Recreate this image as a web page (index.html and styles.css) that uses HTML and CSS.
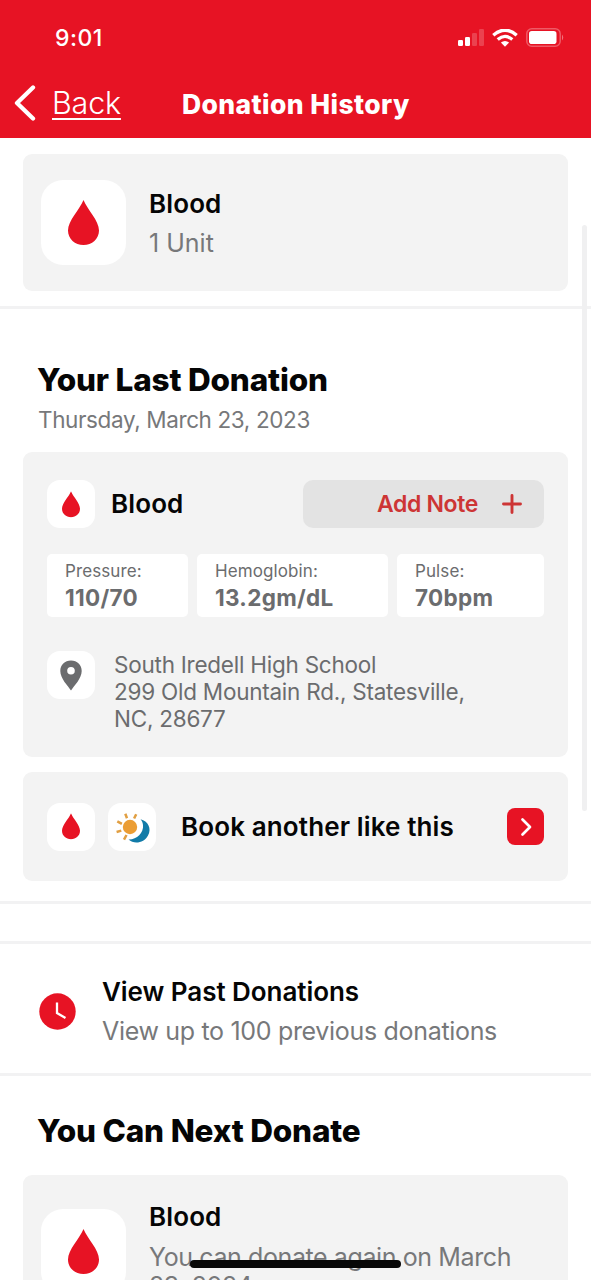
FILE: index.html
```
<!DOCTYPE html>
<html lang="en">
<head>
<meta charset="utf-8">
<title>Donation History</title>
<link rel="stylesheet" href="styles.css">
</head>
<body>
<svg width="0" height="0" class="defs" aria-hidden="true">
  <symbol id="drop" viewBox="0 0 31 46"><path d="M15.500 0C19.500 10 31 20.500 31 30.500C31 39 24 45 15.500 45C7 45 0 39 0 30.500C0 20.500 11.500 10 15.500 0Z" fill="#e71324"/></symbol>
</svg>
<div class="screen">
  <header class="header">
    <div class="status">
      <span class="time">9:01</span>
      <div class="status-icons">
        <svg width="26" height="18" viewBox="0 0 26 18" fill="#fff"><rect x="0" y="11" width="5" height="6" rx="1.200"/><rect x="7" y="8" width="5" height="9" rx="1.200"/><rect x="14" y="4" width="5" height="13" rx="1.200" opacity=".2"/><rect x="21" y="0" width="5" height="17" rx="1.200" opacity=".2"/></svg>
        <svg class="wifi" width="26" height="18" viewBox="0 0 26 18"><path d="M1.300 6.200Q13-3.800 24.700 6.200" fill="none" stroke="#fff" stroke-width="3.400"/><path d="M5.700 10.600Q13 4.200 20.300 10.600" fill="none" stroke="#fff" stroke-width="3.300"/><path d="M8.900 13.600Q13 10.400 17.100 13.600L13 17.800Z" fill="#fff"/></svg>
        <svg class="battery" width="39" height="19" viewBox="0 0 39 19"><rect x=".8" y=".8" width="33.400" height="17.400" rx="5" fill="none" stroke="#fff" stroke-opacity=".3" stroke-width="1.500"/><rect x="3" y="3" width="27.500" height="13" rx="2.800" fill="#fff"/><path d="M36 6.500Q38.500 9.500 36 12.500Z" fill="#fff" opacity=".4"/></svg>
      </div>
    </div>
    <nav class="nav">
      <svg class="chevron" width="22" height="36" viewBox="0 0 22 36"><path d="M19 2.500L3 18L19 33.500" fill="none" stroke="#fff" stroke-width="4.300" stroke-linecap="round" stroke-linejoin="round"/></svg>
      <a class="back">Back</a>
      <h1 class="title">Donation History</h1>
    </nav>
  </header>

  <main class="content">
    <section class="card unit-card">
      <div class="tile tile-large"><svg width="31" height="46"><use href="#drop"/></svg></div>
      <div class="unit-text">
        <div class="name">Blood</div>
        <div class="sub unit">1 Unit</div>
      </div>
    </section>
    <hr class="rule rule-first">

    <h2 class="heading last-heading">Your Last Donation</h2>
    <div class="date">Thursday, March 23, 2023</div>

    <section class="card last-card">
      <div class="last-top">
        <div class="tile"><svg width="18" height="27" viewBox="0 0 31 46"><use href="#drop"/></svg></div>
        <div class="name last-name">Blood</div>
        <div class="add-note">
          <span class="add-label">Add Note</span>
          <svg width="20" height="20" viewBox="0 0 20 20"><path d="M10 1.500V18.500M1.500 10H18.500" stroke="#cd3535" stroke-width="2.900" stroke-linecap="round"/></svg>
        </div>
      </div>
      <div class="stats">
        <div class="stat"><span class="stat-label">Pressure:</span><span class="stat-value">110/70</span></div>
        <div class="stat"><span class="stat-label">Hemoglobin:</span><span class="stat-value">13.2gm/dL</span></div>
        <div class="stat"><span class="stat-label">Pulse:</span><span class="stat-value">70bpm</span></div>
      </div>
      <div class="place">
        <div class="tile"><svg width="22" height="31" viewBox="0 0 22 31"><path fill-rule="evenodd" d="M11 .5C4.800 .5 .3 5 .3 11C.3 18.500 8 26 11 30.500C14 26 21.700 18.500 21.700 11C21.700 5 17.200 .5 11 .5ZM11 7A3.800 3.800 0 1 1 11 14.600A3.800 3.800 0 1 1 11 7Z" fill="#6b6c6e"/></svg></div>
        <div class="address">South Iredell High School<br>299 Old Mountain Rd., Statesville,<br>NC, 28677</div>
      </div>
    </section>

    <section class="card book-card">
      <div class="tile"><svg width="18" height="27" viewBox="0 0 31 46"><use href="#drop"/></svg></div>
      <div class="tile"><svg width="48" height="48" viewBox="0 0 48 48"><path d="M32.500 16.200C40 18 44 25.500 40 32.500C36.500 39.500 26.500 42 20.500 36.500C28 37 36 30 35 22C34.700 19.500 34 17.800 32.500 16.200Z" fill="#117ba8"/><circle cx="22" cy="24" r="7.200" fill="#eb9d34"/><path d="M19 15.300L17.300 10.800M26.100 15.500L28.200 11.300M13.900 20.900L9.300 18.300M13.300 27.600L8.600 29M18.500 32L16 36.600" stroke="#e19f42" stroke-width="2.500"/></svg></div>
      <div class="name book-label">Book another like this</div>
      <div class="go"><svg width="14" height="20" viewBox="0 0 14 20"><path d="M3.500 2.500L11 10L3.500 17.500" fill="none" stroke="#fff" stroke-width="2.700" stroke-linecap="round" stroke-linejoin="round"/></svg></div>
    </section>
    <hr class="rule rule-second">
    <hr class="rule rule-third">

    <section class="past">
      <svg width="37" height="37" viewBox="0 0 37 37"><circle cx="18.500" cy="18.500" r="18.200" fill="#e71324"/><path d="M18 9.500V20L26.500 25" fill="none" stroke="#fff" stroke-width="2.300"/></svg>
      <div class="past-text">
        <div class="name past-name">View Past Donations</div>
        <div class="sub past-sub">View up to 100 previous donations</div>
      </div>
    </section>
    <hr class="rule">

    <h2 class="heading next-heading">You Can Next Donate</h2>
    <section class="card next-card">
      <div class="tile tile-large"><svg width="31" height="46"><use href="#drop"/></svg></div>
      <div class="unit-text">
        <div class="name">Blood</div>
        <div class="sub next-sub">You can donate again on March<br>23, 2024</div>
      </div>
    </section>
  </main>
  <div class="scrollbar"></div>
  <div class="home-bar"></div>
</div>
</body>
</html>
```
FILE: styles.css
```
* { box-sizing: border-box; }
body { margin: 0; background: #fff; font-family: Inter, "Liberation Sans", sans-serif; color: #050505; }
svg { display: block; flex: none; }
.defs { position: absolute; }
.screen { position: relative; width: 591px; height: 1280px; overflow: hidden; white-space: nowrap; }

.header { height: 138px; background: #e71324; color: #fff; }
.status { height: 74px; padding: 1px 26px 0 55px; display: flex; align-items: center; justify-content: space-between; }
.time { font-size: 23px; font-weight: 500; letter-spacing: 0.500px; }
.status-icons { display: flex; align-items: center; }
.wifi { margin-left: 8px; }
.battery { margin-left: 8px; }
.nav { height: 58px; padding-left: 14px; display: flex; align-items: center; }
.back { margin-left: 16px; width: 69px; font-size: 30.500px; font-weight: 300; line-height: 36px; letter-spacing: -0.200px; text-decoration: underline; text-decoration-thickness: 2px; text-underline-offset: 4px; }
.title { margin: 2px 0 0 61px; font-size: 26.500px; font-weight: 800; letter-spacing: 0.400px; }

.content { padding-top: 16px; }
.card { margin: 0 23px; background: #f3f3f3; border-radius: 9px; }
.tile { flex: none; width: 48px; height: 48px; border-radius: 13px; background: #fff; display: flex; align-items: center; justify-content: center; }
.tile-large { width: 85px; height: 85px; border-radius: 22px; }
.name { font-size: 26px; font-weight: 600; line-height: 32px; letter-spacing: 0.120px; }
.sub { font-size: 25px; line-height: 29px; color: #77787a; letter-spacing: -0.320px; }

.unit-card { height: 137px; padding-left: 18px; display: flex; align-items: center; }
.unit-text { margin-left: 23px; }
.unit-text .sub { margin-top: 9px; }
.unit-text .unit { letter-spacing: 0; }
.rule { margin: 0; border: 0; height: 3px; background: #f2f2f3; }
.rule-first { margin-top: 15px; }
.rule-second { margin-top: 20px; }
.rule-third { margin-top: 37px; }

.heading { margin: 0; padding-left: 37px; font-size: 31.500px; font-weight: 800; line-height: 38px; letter-spacing: -0.180px; }
.last-heading { margin-top: 52px; }
.date { margin-top: 8px; padding-left: 38px; font-size: 22.500px; line-height: 26px; color: #77787a; letter-spacing: -0.380px; }

.last-card { margin-top: 19px; height: 305px; padding: 28px 24px 0; }
.last-top { display: flex; align-items: center; }
.last-name { margin-left: 16px; }
.add-note { margin-left: auto; width: 241px; height: 48px; border-radius: 10px; background: #e3e3e3; display: flex; align-items: center; justify-content: flex-end; padding-right: 22px; }
.add-label { margin-right: 24px; font-size: 23px; font-weight: 600; color: #cd3535; letter-spacing: -0.350px; }
.stats { margin-top: 26px; display: grid; grid-template-columns: 141px 191px 147px; gap: 9px; }
.stat { height: 63px; padding: 7px 0 0 18px; border-radius: 5px; background: #fff; color: #6b6c6e; display: flex; flex-direction: column; }
.stat-label { font-size: 17px; line-height: 20px; letter-spacing: 0.100px; }
.stat-value { margin-top: 3px; font-size: 22.500px; line-height: 27px; font-weight: 700; letter-spacing: 0.300px; }
.place { margin-top: 34px; display: flex; }
.address { margin-left: 19px; font-size: 22.500px; line-height: 27px; color: #6b6c6e; letter-spacing: -0.240px; }

.book-card { margin-top: 15px; height: 109px; padding: 0 24px; display: flex; align-items: center; }
.book-card .tile + .tile { margin-left: 13px; }
.book-label { margin-left: 25px; }
.go { margin-left: auto; width: 37px; height: 37px; border-radius: 8px; background: #e71324; display: flex; align-items: center; justify-content: center; }

.past { height: 129px; padding-left: 39px; display: flex; align-items: center; }
.past svg { margin-top: 5px; }
.past-text { margin: 5px 0 0 26px; }
.past-name { letter-spacing: -0.050px; }
.past-sub { margin-top: 9px; }

.next-heading { margin-top: 36px; }
.next-card { margin-top: 25px; height: 145px; padding: 26px 0 0 18px; display: flex; align-items: flex-start; }
.next-card .tile { margin-top: 8px; }
.unit-text .next-sub { margin-top: 10px; letter-spacing: -0.400px; }

.scrollbar { position: absolute; left: 582px; top: 225px; width: 5px; height: 586px; border-radius: 3px; background: #f0f0f1; }
.home-bar { position: absolute; left: 190px; top: 1260px; width: 211px; height: 8px; border-radius: 4px; background: #080808; }
```
